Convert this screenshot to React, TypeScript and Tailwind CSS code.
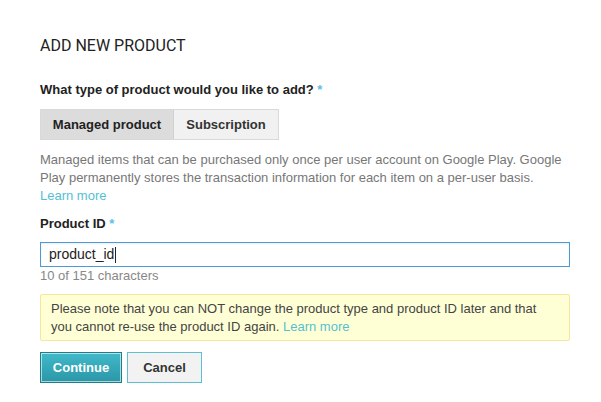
export default function App() {
  return (
    <div className="min-h-[402px] w-[601px] bg-white pl-[40px] pt-[36px] font-['Liberation_Sans',Arial,sans-serif] text-[13px] text-[#333]">
      <h1 className="font-['Roboto',sans-serif] text-[16px] leading-[20px] text-[#222]">
        ADD NEW PRODUCT
      </h1>

      <div className="mt-[25px] font-bold leading-[18px] text-[#222]">
        What type of product would you like to add?{" "}
        <span className="text-[#5bc0de]">*</span>
      </div>

      <div className="mt-[10px] flex h-[31px] w-[239px] border border-[#d9d9d9]">
        <button className="w-[133px] border-r border-[#d0d0d0] bg-[#dcdcdc] font-bold text-[#222]">
          Managed product
        </button>
        <button className="flex-1 bg-[#f1f1f1] font-bold text-[#333]">
          Subscription
        </button>
      </div>

      <p className="mt-[11px] w-[530px] leading-[18px] text-[#777]">
        Managed items that can be purchased only once per user account on
        Google Play. Google Play permanently stores the transaction
        information for each item on a per-user basis.{" "}
        <a className="text-[#55bfd2]">Learn more</a>
      </p>

      <div className="mt-[10px] font-bold leading-[18px] text-[#222]">
        Product ID <span className="text-[#5bc0de]">*</span>
      </div>

      <div className="mt-[9px] flex h-[25px] w-[530px] items-center border border-[#4d9ad8] pl-[8px] text-[14px] text-[#222] shadow-[inset_0_1px_2px_rgba(0,0,0,0.08)]">
        product_id
        <span className="ml-[1px] h-[16px] w-px bg-[#222]" />
      </div>
      <div className="leading-[18px] text-[#888]">10 of 151 characters</div>

      <div className="mt-[9px] w-[530px] rounded-[2px] border border-[#f8e69a] bg-[#ffffd6] px-[10px] pb-[4px] pt-[5px] leading-[18px] text-[#444]">
        Please note that you can NOT change the product type and product ID
        later and that you cannot re-use the product ID again.{" "}
        <a className="text-[#55bfd2]">Learn more</a>
      </div>

      <div className="mt-[11px] flex gap-[5px]">
        <button className="h-[31px] w-[82px] border border-[#1d7f8e] bg-gradient-to-b from-[#41b9c9] to-[#2a97a7] font-bold text-white shadow-[inset_0_0_0_1px_rgba(255,255,255,0.6)]">
          Continue
        </button>
        <button className="h-[31px] w-[75px] border border-[#5cc0d0] bg-[#f2f2f2] font-bold text-[#333]">
          Cancel
        </button>
      </div>
    </div>
  );
}
